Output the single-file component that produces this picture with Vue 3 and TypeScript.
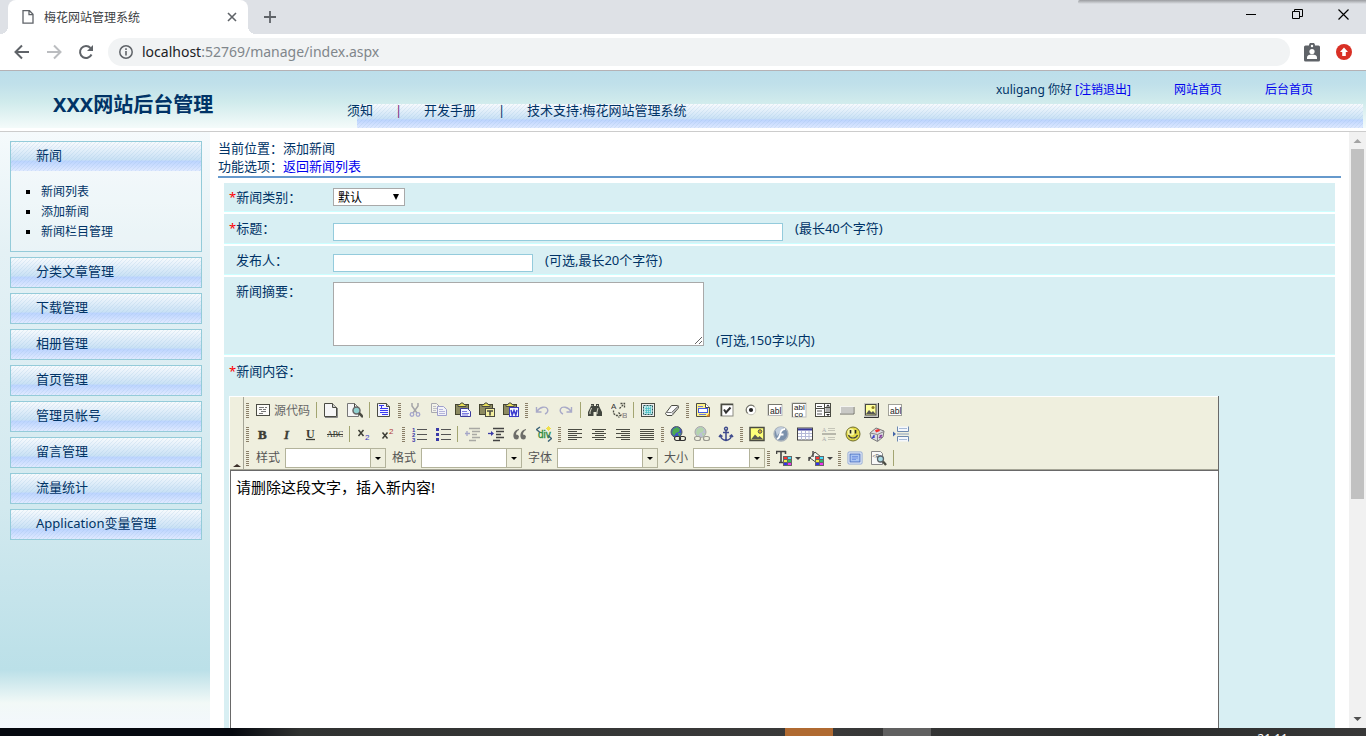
<script setup lang="ts">
import { ref } from 'vue'

interface Tool {
  kind: 'button' | 'sep' | 'grip' | 'combo'
  label?: string
  icon?: string
  text?: string
  menu?: boolean
  short?: boolean
}

const D = '#4a4b42'

const icons: Record<string, string> = {
  source: `<rect x="1.500" y="2.500" width="13" height="11" fill="#fbfbf8" stroke="${D}"/><path d="M4 5.500h5M10 5.500h2M4 7.500h3M8 7.500h3M6 9.500h5M4 11.500h4" stroke="#777"/>`,
  newpage: `<path d="M1.500 1.500h8l4 4v9h-12z" fill="#f6f6f6" stroke="${D}"/><path d="M9.500 1.500v4h4" fill="#ccc" stroke="${D}"/><path d="M2 15.500h12.500V6" fill="none" stroke="#888"/>`,
  preview: `<path d="M.500 1.500h7l4 4v9h-11z" fill="#f6f6f6" stroke="#777"/><path d="M7.500 1.500v4h4" fill="none" stroke="${D}"/><circle cx="9.500" cy="8.500" r="3.500" fill="#8fd0cf" stroke="#666" stroke-width="1.500"/><path d="M12 11l4 4" stroke="${D}" stroke-width="2.500"/>`,
  template: `<path d="M2.500 1.500h8l3 3v10h-12V1.500z" fill="#f2f3ff" stroke="${D}"/><path d="M10.500 1.500v3h3" fill="#ccc" stroke="${D}"/><path d="M3 3.500h5M5.500 3v3M4 6.500h8M4 8.500h8M4 10.500h8M6 12.500h6" stroke="#3a3af0"/>`,
  cut: `<path d="M5 1v3l5 7M11 1v3l-5 7" fill="none" stroke="#a5a5a8" stroke-width="1.500"/><circle cx="5" cy="12.500" r="1.800" fill="none" stroke="#a5a6cc" stroke-width="1.300"/><circle cx="11" cy="12.500" r="1.800" fill="none" stroke="#a5a6cc" stroke-width="1.300"/>`,
  copy: `<path d="M.500 1.500h5l3 3v6h-8z" fill="#f3f3ea" stroke="#a9a9b0"/><path d="M2 4.500h3M2 6.500h4M2 8.500h3" stroke="#c0c0c6"/><path d="M6.500 4.500h6l3 3v6h-9z" fill="#f3f3f8" stroke="#9fa0cc"/><path d="M8 7.500h4M8 9.500h6M8 11.500h6" stroke="#b5b5da"/>`,
  paste: `<rect x=".500" y="2.500" width="13" height="10" fill="#8c8a60" stroke="#44442e"/><path d="M3 4.500V2.500h2l1-1.500h2l1 1.500h2v2z" fill="#e9e15a" stroke="${D}"/><path d="M5.500 6.500h7l3 3v5h-10z" fill="#f3f5ff" stroke="#3b3b9b"/><path d="M7 9.500h5M7 11.500h7M7 13h6" stroke="#7c7ce0"/>`,
  pastetext: `<rect x=".500" y="2.500" width="13" height="10" fill="#8c8a60" stroke="#44442e"/><path d="M3 4.500V2.500h2l1-1.500h2l1 1.500h2v2z" fill="#e9e15a" stroke="${D}"/><rect x="6.500" y="6.500" width="9" height="8" fill="#f5f0a0" stroke="${D}"/><path d="M8 9h6M11 9v4.500" stroke="${D}" stroke-width="1.600"/>`,
  pasteword: `<rect x=".500" y="2.500" width="13" height="10" fill="#8c8a60" stroke="#44442e"/><path d="M3 4.500V2.500h2l1-1.500h2l1 1.500h2v2z" fill="#e9e15a" stroke="${D}"/><rect x="6.500" y="5.500" width="9" height="9" fill="#f3f5ff" stroke="#3b3bc0"/><path d="M8 8l1.200 5 1.800-4.500 1.800 4.500L14 8" fill="none" stroke="#3b3bd0" stroke-width="1.500"/>`,
  undo: `<path d="M2.500 5v5h5M3 9.500c3-5 9-5.500 10.500-2.500 .8 2-.5 4-2.500 5" fill="none" stroke="#a9aac8" stroke-width="1.400"/>`,
  redo: `<path d="M13.500 5v5h-5M13 9.500c-3-5-9-5.500-10.500-2.500-.8 2 .5 4 2.500 5" fill="none" stroke="#a9aac8" stroke-width="1.400"/>`,
  find: `<path d="M4 2h3v2h2V2h3v2l3 6v4H9.500v-4h-3v4H1v-4l3-6z" fill="#42463f"/><path d="M4.500 6L3 10v2M11 6l-1 4v2M5 3v1M10.500 3v1" stroke="#d8d8c8" fill="none"/>`,
  replace: `<text x="0" y="6.500" font-size="8" font-family="Liberation Sans" fill="#333">A</text><text x="11" y="15.500" font-size="8" font-family="Liberation Sans" font-weight="bold" fill="#999">B</text><path d="M8.500 6.500l4-4M9.500 1.500h4v4" stroke="${D}" stroke-width="1.300" fill="none" stroke-dasharray="2 1"/><path d="M2.500 8.500v3l3 2h3M7.500 10.500l2.500 2.500-2.500 2.500" stroke="${D}" stroke-width="1.300" fill="none" stroke-dasharray="2 1"/>`,
  selectall: `<rect x="1.500" y="1.500" width="13" height="13" fill="#efefef" stroke="${D}"/><rect x="3.500" y="3.500" width="9" height="9" fill="#bfe9ea" stroke="#25575a" stroke-dasharray="2 1"/><path d="M5 6.500h6M5 8.500h6M5 10.500h6M6.500 4.500v7M8.500 4.500v7M10.500 4.500v7" stroke="#43bfc4" stroke-width=".7"/>`,
  eraser: `<path d="M1.500 11.500l6-8h6q2 1 .5 3l-6 7h-5z" fill="#fafafa" stroke="${D}"/><path d="M2 10.500h5.500l7-7" fill="none" stroke="#777"/><path d="M8 13l6-7v-2l-6 7z" fill="#aaa"/>`,
  form: `<path d="M1.500 1.500h9l4 4v9h-13z" fill="#fff38a" stroke="${D}"/><path d="M10.500 1.500v4h4" fill="#fff" stroke="${D}"/><path d="M3 4.500h5M4 12.500h7" stroke="#6a75d8"/><rect x="3.500" y="6.500" width="9" height="4" fill="#fff" stroke="#4458e8"/><path d="M11 14.500l3.500-3.500v3.500z" fill="#e88a2a"/>`,
  checkbox: `<rect x="2" y="2" width="12" height="12" fill="#fff" stroke="#8b8b82"/><path d="M2.500 14V2.500H14" fill="none" stroke="${D}" stroke-width="1.500"/><path d="M5 7.500l2 3 4.500-5" fill="none" stroke="#333" stroke-width="2"/>`,
  radio: `<circle cx="8" cy="8" r="4.800" fill="#fff" stroke="#c4c4ba"/><path d="M4.600 11.400a4.800 4.800 0 0 1 6.800-6.800" fill="none" stroke="#77776e" stroke-width="1.200"/><circle cx="8" cy="8" r="2.100" fill="#222"/>`,
  textfield: `<rect x="1" y="2.500" width="14" height="11" fill="#fff" stroke="#bbb"/><path d="M1.500 13V2.500H15" fill="none" stroke="#77776e"/><text x="3" y="11.500" font-size="8.500" font-family="Liberation Sans" fill="#222">abl</text>`,
  textarea: `<rect x="1" y="1" width="14" height="14" fill="#fff" stroke="#bbb"/><path d="M1.500 15V1.500H15" fill="none" stroke="#77776e"/><text x="3" y="8" font-size="8" font-family="Liberation Sans" fill="#222">abl</text><text x="3.500" y="14.500" font-size="8" font-family="Liberation Sans" fill="#222">co</text>`,
  selectfield: `<rect x=".500" y="1.500" width="15" height="13" fill="#fff" stroke="${D}"/><path d="M0 6.500h10M9.500 1v14M10 5.500h6M10 10.500h6" stroke="${D}"/><path d="M2 4.500h5M2 9h5M2 12h5" stroke="#555"/><path d="M11 4.500h4l-2-2zM11 12h4l-2 2z" fill="#222"/><rect x="10.500" y="6" width="4.500" height="4" fill="#aaa"/>`,
  button: `<rect x="1.500" y="4.500" width="13" height="7" fill="#c9c9c6" stroke="#f4f4f0"/><path d="M1 12h14V5" fill="none" stroke="#6b6b65"/>`,
  imagebutton: `<rect x="1" y="1" width="14" height="14" fill="#c8c8c2"/><path d="M1 15.500h14.500V1" fill="none" stroke="#333"/><rect x="2.500" y="2.500" width="10.500" height="10.500" fill="#ffff9a" stroke="${D}"/><path d="M3 12l3-4 2.500 2.500L10 9l3 3.500z" fill="#555"/><circle cx="10" cy="5.500" r="1.500" fill="#8b7b20"/>`,
  hidden: `<rect x="1.500" y="2.500" width="13" height="11" fill="#fff" stroke="${D}" stroke-dasharray="1 1"/><text x="3" y="11.500" font-size="8.500" font-family="Liberation Sans" fill="#222">abl</text>`,
  bold: `<text x="3" y="12.500" font-size="13" font-family="Liberation Serif" font-weight="bold" fill="#3c3d35" stroke="#3c3d35" stroke-width=".500">B</text>`,
  italic: `<text x="5" y="12.500" font-size="13" font-family="Liberation Serif" font-weight="bold" font-style="italic" fill="#3c3d35" stroke="#3c3d35" stroke-width=".300">I</text>`,
  underline: `<text x="3" y="11.500" font-size="12" font-family="Liberation Serif" font-weight="bold" fill="#3c3d35">U</text><path d="M3 13.500h9" stroke="#3c3d35" stroke-width="1.300"/>`,
  strike: `<text x="0" y="11" font-size="8" font-family="Liberation Serif" fill="#22231b">ABC</text><path d="M0 8.500h16" stroke="#3c3d35"/>`,
  sub: `<path d="M2.500 4l5 6M7.500 4l-5 6" stroke="#3c3d35" stroke-width="1.500"/><text x="9" y="14" font-size="8" font-family="Liberation Sans" fill="#3a3ac0">2</text>`,
  sup: `<path d="M2.500 6.500l5 6M7.500 6.500l-5 6" stroke="#3c3d35" stroke-width="1.500"/><text x="9" y="8" font-size="8" font-family="Liberation Sans" fill="#b03a3a">2</text>`,
  ol: `<path d="M6 3.500h10M6 8.500h10M6 13.500h10" stroke="#555"/><text x="1" y="5.500" font-size="6" font-family="Liberation Sans" font-weight="bold" fill="#3a3aa8">1</text><text x="1" y="10.500" font-size="6" font-family="Liberation Sans" font-weight="bold" fill="#3a3aa8">2</text><text x="1" y="15.500" font-size="6" font-family="Liberation Sans" font-weight="bold" fill="#3a3aa8">3</text>`,
  ul: `<path d="M6 3.500h10M6 8.500h10M6 13.500h10" stroke="#555"/><path d="M1 2h3v3H1zM1 7h3v3H1zM1 12h3v3H1z" fill="#3a3aa8"/>`,
  outdent: `<path d="M5 2.500h11M8 5.500h8M8 8.500h5M8 11.500h8M5 14.500h7" stroke="#a9a9a4" stroke-width="1.300"/><path d="M1 7.500h5M3 5v5" stroke="#a5a6c8" stroke-width="1.300"/>`,
  indent: `<path d="M5 2.500h11M8 5.500h8M8 8.500h5M8 11.500h8M5 14.500h7" stroke="#444" stroke-width="1.300"/><path d="M0 7.500h4" stroke="#3a3aa8" stroke-width="1.300"/><path d="M3 5v5l3-2.500z" fill="#3a3aa8"/>`,
  quote: `<path d="M7 3C3 4 1 6.500 1.500 11q.5 2.500 3 2.500 2.500-.5 2.500-3-.5-2-3-2 0-3 3-4.500zM14 3c-4 1-6 3.500-5.500 8q.5 2.500 3 2.500 2.500-.5 2.500-3-.5-2-3-2 0-3 3-4.500z" fill="#6d6d69"/>`,
  div: `<text x="2" y="11.500" font-size="10" font-family="Liberation Sans" fill="#2b8a3a" stroke="#2b8a3a" stroke-width=".300">div</text><path d="M4 1L.500 3.500 4 6.500M12 9.500l3.500 3-3.500 3" fill="none" stroke="#3d6478" stroke-width="1.500"/><path d="M12.500 0v5M10 2.500h5M11 1l3 3M14 1l-3 3" stroke="#f0e04a"/>`,
  left: `<path d="M1 3.500h14M1 5.500h9M1 7.500h14M1 9.500h9M1 11.500h14M1 13.500h9" stroke="${D}"/>`,
  center: `<path d="M1 3.500h14M4 5.500h9M1 7.500h14M4 9.500h9M1 11.500h14M4 13.500h9" stroke="${D}"/>`,
  right: `<path d="M1 3.500h14M6 5.500h9M1 7.500h14M6 9.500h9M1 11.500h14M6 13.500h9" stroke="${D}"/>`,
  justify: `<path d="M1 3.500h14M1 5.500h14M1 7.500h14M1 9.500h14M1 11.500h14M1 13.500h14" stroke="${D}"/>`,
  link: `<circle cx="6.500" cy="6" r="5.500" fill="#3f55c8" stroke="#555b60"/><path d="M3 3l4-2 3 2-1 3-3 1-2 3-2-3zM8 7l3 0-2 4z" fill="#4dab50"/><rect x="4.500" y="10.500" width="6" height="4" rx="2" fill="#efefde" stroke="#333" stroke-width="1.200"/><rect x="9.500" y="10.500" width="6" height="4" rx="2" fill="none" stroke="#333" stroke-width="1.200"/>`,
  unlink: `<g opacity=".45"><circle cx="6.500" cy="6" r="5.500" fill="#7f89c8" stroke="#555b60"/><path d="M3 3l4-2 3 2-1 3-3 1-2 3-2-3zM8 7l3 0-2 4z" fill="#6db570"/><rect x=".500" y="10.500" width="6" height="4" rx="2" fill="#efefde" stroke="#333" stroke-width="1.200"/><rect x="9.500" y="10.500" width="6" height="4" rx="2" fill="#efefde" stroke="#333" stroke-width="1.200"/></g>`,
  anchor: `<circle cx="8" cy="2.700" r="1.500" fill="none" stroke="#3e4a8c" stroke-width="1.400"/><path d="M8 4v10.500M5 6.500h6M2.500 9.500c.5 3 2.500 4.500 5.500 5 3-.5 5-2 5.500-5M1 11l1.500-2 2 1.500M15 11l-1.500-2-2 1.500" fill="none" stroke="#3e4a8c" stroke-width="1.500"/>`,
  image: `<rect x="1" y="1.500" width="14" height="13" fill="#ffff7a" stroke="${D}" stroke-width="1.500"/><path d="M2 13.500l4-5 3 3 1.500-1.500 4 3.500z" fill="#5a5a55"/><circle cx="11" cy="5.500" r="1.800" fill="#d9a92b" stroke="#555"/>`,
  flash: `<circle cx="8" cy="8" r="7" fill="#7b91ac" stroke="#a9b1ba" stroke-width="1.300"/><path d="M2.500 4a7 7 0 0 1 8-2.500L4 10z" fill="#c3cfdd"/><path d="M12 3c-4 0-4.500 3-5 5.500S5.500 12.500 4 13M7 8.500h3.500" fill="none" stroke="#fff" stroke-width="1.800"/>`,
  table: `<rect x=".500" y="2" width="15" height="12" fill="#fff" stroke="#444"/><path d="M1 2.500h14v2H1z" fill="#37379b"/><path d="M1 7.500h14M1 10.500h14M4.500 5v9M8.500 5v9M12 5v9" stroke="#b5b9d8"/>`,
  hr: `<path d="M1 8h14" stroke="#999a90" stroke-width="1.300"/><text x="1" y="6" font-size="6" font-family="Liberation Serif" fill="#aaa">A</text><text x="1" y="15" font-size="6" font-family="Liberation Serif" fill="#aaa">A</text><path d="M7 2.500h7M7 4.500h7M7 11.500h7M7 13.500h7" stroke="#c5c5b8"/>`,
  smiley: `<circle cx="8" cy="8" r="7" fill="#e3da48" stroke="#6e6c2c"/><circle cx="6" cy="6" r="3.500" fill="#f8f6a0"/><path d="M5.500 4v3.500M10.500 4v3.500" stroke="#222" stroke-width="1.600"/><path d="M3.500 9c1.500 4 7.500 4 9 0" fill="none" stroke="#444" stroke-width="1.200"/>`,
  special: `<path d="M1 7l6-5 8 3-1 6-5.500 4.500L2 12z" fill="#dcdce2" stroke="#777"/><path d="M8.500 15V8.500l6.500-3M8.500 8.500L1 7" fill="none" stroke="#888"/><path d="M6 4l4-1 1 2-4 1.500z" fill="#f03030"/><path d="M3 12.500l2-3M5 12V9" stroke="#4040c8" stroke-width="1.300"/><path d="M10 12l3-3M11 9l1.500 3" stroke="#8a40a0" stroke-width="1.300"/>`,
  pagebreak: `<path d="M4.500 .500v5h11v-5M4.500 15.500v-5h11v5" fill="#f4f7fc" stroke="#6d88ae"/><path d="M6 2.500h8M6 13.500h8" stroke="#a8bcd8"/><path d="M4 8h12" stroke="#8aa0c0"/><path d="M0 5.500v5L3 8z" fill="#4466a8"/>`,
  color: `<path d="M0 1.500h10M.5 1v3M9.500 1v3M5 2v10M3 12.500h4" fill="none" stroke="#444" stroke-width="1.600"/><rect x="7" y="6" width="9" height="10" fill="#666"/><path d="M8 7h3v2H8z" fill="#f33"/><path d="M12 7h3v2h-3z" fill="#4df"/><path d="M8 10h3v2H8z" fill="#ee4"/><path d="M12 10h3v2h-3z" fill="#3b6"/><path d="M8 13h3v2H8z" fill="#33e"/><path d="M12 13h3v2h-3z" fill="#e3e"/>`,
  bgcolor: `<path d="M2 8l5-6 6 5-4 6z" fill="#f4f4ee" stroke="${D}"/><path d="M5 1v6M1 7v4M2 7l-1 3" stroke="#444" stroke-width="1.400" fill="none"/><rect x="7" y="6" width="9" height="10" fill="#666"/><path d="M8 7h3v2H8z" fill="#f33"/><path d="M12 7h3v2h-3z" fill="#4df"/><path d="M8 10h3v2H8z" fill="#ee4"/><path d="M12 10h3v2h-3z" fill="#3b6"/><path d="M8 13h3v2H8z" fill="#33e"/><path d="M12 13h3v2h-3z" fill="#e3e"/>`,
  maximize: `<rect x="1" y="2" width="14" height="12" rx="1" fill="#fff" stroke="#8aa4d4"/><rect x="3" y="4" width="10" height="8" fill="#a9c4f2" stroke="#4a70c0"/><path d="M5 6.500h6M5 8h6M5 9.500h4" stroke="#6c8ede" stroke-width=".800"/>`,
  blocks: `<path d="M.500 1.500h9l2 2v11h-11z" fill="#f8f8f8" stroke="#888"/><text x="1.500" y="7.500" font-size="5" font-family="Liberation Sans" fill="#555">&lt;P&gt;</text><circle cx="9.500" cy="9" r="3" fill="#a9dce6" stroke="#5c6468" stroke-width="1.300"/><path d="M12 11.500l3 3.500" stroke="${D}" stroke-width="2.300"/>`,
}

const b = (icon: string, label: string): Tool => ({ kind: 'button', icon, label })
const sep: Tool = { kind: 'sep' }
const grip: Tool = { kind: 'grip' }

const toolRows: Tool[][] = [
  [
    grip, { kind: 'button', icon: 'source', label: '源代码', text: '源代码' }, sep,
    b('newpage', '新建'), b('preview', '预览'), sep, b('template', '模板'), grip,
    b('cut', '剪切'), b('copy', '复制'), b('paste', '粘贴'), b('pastetext', '粘贴为无格式文本'), b('pasteword', '从 MS Word 粘贴'), grip,
    b('undo', '撤消'), b('redo', '重做'), sep, b('find', '查找'), b('replace', '替换'), sep,
    b('selectall', '全选'), b('eraser', '清除格式'), grip,
    b('form', '表单'), b('checkbox', '复选框'), b('radio', '单选按钮'), b('textfield', '单行文本'), b('textarea', '多行文本'),
    b('selectfield', '列表'), b('button', '按钮'), b('imagebutton', '图像域'), b('hidden', '隐藏域'),
  ],
  [
    grip, b('bold', '加粗'), b('italic', '倾斜'), b('underline', '下划线'), b('strike', '删除线'), sep,
    b('sub', '下标'), b('sup', '上标'), grip, b('ol', '编号列表'), b('ul', '项目列表'), sep,
    b('outdent', '减少缩进'), b('indent', '增加缩进'), b('quote', '块引用'), b('div', '创建 DIV'), grip,
    b('left', '左对齐'), b('center', '居中'), b('right', '右对齐'), b('justify', '两端对齐'), grip,
    b('link', '超链接'), b('unlink', '取消超链接'), b('anchor', '锚点'), grip,
    b('image', '图像'), b('flash', 'Flash'), b('table', '表格'), b('hr', '水平线'), b('smiley', '表情符'),
    b('special', '特殊符号'), b('pagebreak', '分页符'),
  ],
  [
    grip, { kind: 'combo', label: '样式' }, { kind: 'combo', label: '格式' }, { kind: 'combo', label: '字体' },
    { kind: 'combo', label: '大小', short: true }, grip,
    { kind: 'button', icon: 'color', label: '文本颜色', menu: true },
    { kind: 'button', icon: 'bgcolor', label: '背景颜色', menu: true }, grip,
    b('maximize', '全屏'), b('blocks', '显示区块'), sep,
  ],
]

const newsItems = ['新闻列表', '添加新闻', '新闻栏目管理']
const sections = ['分类文章管理', '下载管理', '相册管理', '首页管理', '管理员帐号', '留言管理', '流量统计', 'Application变量管理']

const title = ref('')
const publisher = ref('')
const summary = ref('')
const category = ref('默认')
const content = ref('请删除这段文字，插入新内容!')
</script>

<template>
  <div class="screen">
    <div class="tabstrip">
      <div class="tab">
        <svg class="doc" width="12" height="14" viewBox="0 0 12 14"><path d="M1 .7h6.500L11 4.200v9H1zM7 .7v4h4" fill="none" stroke="#5f6368" stroke-width="1.300" /></svg>
        <span class="tab-title">梅花网站管理系统</span>
        <button class="plain" aria-label="关闭标签页">
          <svg width="10" height="10" viewBox="0 0 10 10"><path d="M1 1l8 8M9 1L1 9" stroke="#5f6368" stroke-width="1.600" /></svg>
        </button>
      </div>
      <button class="plain add" aria-label="新标签页">
        <svg width="12" height="12" viewBox="0 0 12 12"><path d="M6 0v12M0 6h12" stroke="#5f6368" stroke-width="1.800" /></svg>
      </button>
      <div class="window-controls">
        <button class="plain" aria-label="最小化"><svg width="11" height="11" viewBox="0 0 11 11"><path d="M0 5.500h10" stroke="#000" /></svg></button>
        <button class="plain" aria-label="还原"><svg width="11" height="11" viewBox="0 0 11 11"><path d="M.5 2.500h7v7h-7zM2.500 2.500v-2h8v7h-3" fill="none" stroke="#000" /></svg></button>
        <button class="plain" aria-label="关闭"><svg width="11" height="11" viewBox="0 0 11 11"><path d="M.5 .5l10 10M10.500 .5l-10 10" stroke="#000" stroke-width="1.200" /></svg></button>
      </div>
      <div class="edge-shadow"></div>
    </div>

    <div class="toolbar">
      <button class="plain nav" aria-label="后退"><svg width="16" height="16" viewBox="0 0 16 16"><path d="M15 8H2M8 1.500L1.500 8 8 14.500" fill="none" stroke="#5f6368" stroke-width="2" /></svg></button>
      <button class="plain nav" aria-label="前进"><svg width="16" height="16" viewBox="0 0 16 16"><path d="M1 8h13M8 1.500L14.500 8 8 14.500" fill="none" stroke="#bbbdc0" stroke-width="2" /></svg></button>
      <button class="plain nav" aria-label="重新加载"><svg width="16" height="16" viewBox="0 0 16 16"><path d="M13.500 10.500A6 6 0 1 1 12.500 4" fill="none" stroke="#5f6368" stroke-width="2" /><path d="M15 1v6H9z" fill="#5f6368" /></svg></button>
      <div class="omnibox">
        <svg width="14" height="14" viewBox="0 0 14 14"><circle cx="7" cy="7" r="6.200" fill="none" stroke="#5f6368" stroke-width="1.500" /><path d="M7 6v4.500M7 3.300v1.600" stroke="#5f6368" stroke-width="1.600" /></svg>
        <a class="url" href="#"><span>localhost</span>:52769/manage/index.aspx</a>
      </div>
      <button class="plain ext" aria-label="用户"><svg width="16" height="19" viewBox="0 0 16 19"><path d="M1.500 2.500H5a3 3 0 0 1 6 0h3.500q1.500 0 1.500 1.500v13q0 1.500-1.500 1.500h-13Q0 18.500 0 17V4q0-1.500 1.500-1.500z" fill="#5f6368" /><circle cx="8" cy="3" r="1.200" fill="#fff" /><circle cx="8" cy="8.500" r="2.600" fill="#fff" /><path d="M3 16v-1.500q0-3 5-3t5 3V16z" fill="#fff" /></svg></button>
      <button class="plain ext" aria-label="更新"><svg width="16" height="16" viewBox="0 0 16 16"><circle cx="8" cy="8" r="8" fill="#d93025" /><path d="M8 3.500L12 8H9.800v4H6.200V8H4z" fill="#fff" /></svg></button>
    </div>

    <header class="banner">
      <h1>XXX网站后台管理</h1>
      <div class="banner-right">
        <div class="account">
          <span>xuligang 你好 <a href="#">[注销退出]</a></span>
          <a href="#">网站首页</a>
          <a href="#">后台首页</a>
        </div>
        <nav class="topnav">
          <a href="#">须知</a><i class="violet">|</i><a href="#">开发手册</a><i>|</i><a href="#">技术支持:梅花网站管理系统</a>
        </nav>
      </div>
    </header>

    <div class="body">
      <aside class="sidebar">
        <section class="group">
          <button class="group-head">新闻</button>
          <ul>
            <li v-for="item in newsItems" :key="item"><a href="#">{{ item }}</a></li>
          </ul>
        </section>
        <section v-for="name in sections" :key="name" class="group">
          <button class="group-head">{{ name }}</button>
        </section>
      </aside>

      <main class="content">
        <div class="crumbs">
          <div>当前位置：添加新闻</div>
          <div>功能选项：<a href="#">返回新闻列表</a></div>
        </div>
        <form class="form" @submit.prevent>
          <div class="row">
            <label for="category"><em>*</em>新闻类别：</label>
            <span class="category">
              <select id="category" v-model="category"><option>默认</option></select>
            </span>
          </div>
          <div class="row tall">
            <label for="title"><em>*</em>标题：</label>
            <input id="title" v-model="title" type="text" class="wide">
            <span class="hint">(最长40个字符)</span>
          </div>
          <div class="row">
            <label for="publisher" class="optional">发布人：</label>
            <input id="publisher" v-model="publisher" type="text">
            <span class="hint">(可选,最长20个字符)</span>
          </div>
          <div class="row summary">
            <label for="summary" class="optional">新闻摘要：</label>
            <textarea id="summary" v-model="summary"></textarea>
            <span class="hint">(可选,150字以内)</span>
          </div>
          <div class="article">
            <label for="article"><em>*</em>新闻内容：</label>
            <div class="editor">
              <div class="editor-top">
                <button class="collapser" type="button" aria-label="折叠工具栏"><span></span></button>
                <div class="tool-rows">
                  <div v-for="(row, r) in toolRows" :key="r" class="tool-row">
                    <template v-for="(tool, t) in row" :key="t">
                      <span v-if="tool.kind === 'sep'" class="sep"></span>
                      <span v-else-if="tool.kind === 'grip'" class="grip"></span>
                      <label v-else-if="tool.kind === 'combo'" class="combo" :class="{ short: tool.short }">
                        {{ tool.label }}
                        <span class="combo-box"><select :aria-label="tool.label"><option></option></select></span>
                      </label>
                      <button v-else type="button" class="tool" :class="{ source: tool.text, menu: tool.menu }" :aria-label="tool.label">
                        <svg width="16" height="16" viewBox="0 0 16 16" v-html="icons[tool.icon ?? '']"></svg>
                        <span v-if="tool.text">{{ tool.text }}</span>
                        <span v-if="tool.menu" class="caret"></span>
                      </button>
                    </template>
                  </div>
                </div>
              </div>
              <textarea id="article" v-model="content" class="article-text"></textarea>
            </div>
          </div>
        </form>
      </main>

      <div class="scrollbar">
        <svg width="17" height="17" viewBox="0 0 17 17"><path d="M4.500 11h8l-4-4z" fill="#a3a3a3" /></svg>
        <div class="thumb"></div>
        <svg class="down" width="17" height="17" viewBox="0 0 17 17"><path d="M4.500 6h8l-4 4z" fill="#505050" /></svg>
      </div>
    </div>

    <footer class="taskbar">
      <div class="left"></div>
      <div class="task active"></div>
      <div class="gap"></div>
      <div class="task"></div>
      <time>21:11</time>
    </footer>
  </div>
</template>

<style>
html, body { margin: 0; overflow: hidden; }
</style>

<style scoped>
.screen {
  --stripes: linear-gradient(135deg, rgba(150, 190, 220, .22) 13%, transparent 13% 50%, rgba(150, 190, 220, .22) 50% 63%, transparent 63%);
  --shade: linear-gradient(#f7fafd, #c9e1f5 62%, #bcd4ff 66%, #dfe9ff);
  display: flex;
  flex-direction: column;
  height: 100vh;
  overflow: hidden;
  background: #fff;
  color: #003366;
  font: 13px/18px "Noto Sans", "Noto Sans CJK SC", sans-serif;
}
.screen * { box-sizing: border-box; }
a { color: #00e; text-decoration: none; }
button, input, select, textarea { font-family: inherit; border-radius: 0; }
.plain { display: flex; align-items: center; justify-content: center; padding: 0; border: 0; background: none; }

.tabstrip { position: relative; display: flex; flex: none; height: 34px; padding-left: 8px; background: #dee1e6; }
.tab { position: relative; display: flex; align-items: center; width: 240px; padding: 0 11px 0 14px; border-radius: 8px 8px 0 0; background: #fff; color: #3c4043; font-size: 12px; }
.tab::before, .tab::after { content: ""; position: absolute; bottom: 0; width: 8px; height: 8px; }
.tab::before { left: -8px; background: radial-gradient(circle at 0 0, transparent 8px, #fff 8px); }
.tab::after { right: -8px; background: radial-gradient(circle at 100% 0, transparent 8px, #fff 8px); }
.doc { flex: none; margin-right: 10px; }
.tab-title { flex: 1; padding-top: 1px; }
.add { width: 44px; }
.window-controls { display: flex; height: 29px; margin-left: auto; }
.window-controls button { width: 46px; }
.edge-shadow { position: absolute; top: 0; right: 0; width: 288px; height: 4px; border-radius: 4px 0 0 4px; background: linear-gradient(#9a9ca0, #dee1e6); }

.toolbar { display: flex; flex: none; align-items: center; height: 37px; padding: 0 6px; border-bottom: 1px solid #b5b1b4; }
.nav { width: 32px; height: 32px; }
.omnibox { display: flex; flex: 1; align-items: center; gap: 9px; height: 28px; margin: 0 6px; padding: 0 11px; border-radius: 14px; background: #f1f3f4; }
.url { color: #80868b; font-size: 14px; }
.url span { color: #202124; }
.ext { width: 32px; height: 32px; }

.banner { display: flex; flex: none; height: 61px; border-bottom: 1px solid #ccc; background: linear-gradient(#bcdeea, #c0e0ea 13px, #d0ebec 31px, #f4fbfa 57px, #fff 57px); }
h1 { width: 347px; margin: 0; padding-left: 53px; font-size: 20px; line-height: 68px; font-weight: 700; }
.banner-right { display: flex; flex: 1; flex-direction: column; }
.account { display: flex; gap: 43px; height: 33px; padding: 10px 53px 0 0; justify-content: flex-end; font-size: 12px; }
.topnav { display: flex; height: 24px; margin-right: 3px; background: var(--stripes) 10px 0 / 4px 4px, var(--shade); background-clip: content-box; line-height: 12px; }
.topnav { position: relative; z-index: 0; background: none; }
.topnav::before { content: ""; position: absolute; z-index: -1; inset: 0 0 0 10px; background: var(--stripes) 0 0 / 4px 4px, var(--shade); }
.topnav a { color: inherit; }
.topnav i { width: 51px; font-style: normal; text-align: center; }
.topnav .violet { color: #7a2a7a; }

.body { display: flex; flex: 1; min-height: 0; overflow: hidden; }
.sidebar { display: flex; flex: none; flex-direction: column; gap: 5px; width: 210px; padding: 9px 8px 0 10px; background: linear-gradient(#f5fafc, #e4f1f5 120px, #d2e9ef 375px, #bbe0e8 calc(100% - 58px), #f2f9f7 calc(100% - 25px), #f3f7fd); }
.group { border: 1px solid #94cbd9; background: rgba(255, 255, 255, .2); }
.group-head { display: block; width: 100%; height: 29px; padding: 0 0 4px 25px; border: 0; background: var(--stripes) 0 0 / 4px 4px, var(--shade); color: inherit; font-size: 13px; line-height: 18px; text-align: left; }
.group ul { margin: 0; padding: 11px 0 9px 30px; color: #000; font-size: 12px; line-height: 20px; list-style: none; }
.group li { display: flex; align-items: center; }
.group li::before { content: ""; width: 4px; height: 4px; margin: 0 11px 0 -15px; background: #000; }
.group li a { color: #003366; }

.content { display: flex; flex: 1; flex-direction: column; min-width: 0; padding: 7px 8px 0; }
.crumbs { flex: none; padding-bottom: 1px; border-bottom: 2px solid #69c; }
.form { display: flex; flex: 1; flex-direction: column; gap: 2px; min-height: 0; padding: 5px 6px 0; }
.row { display: flex; flex: none; height: 29px; padding-left: 5px; border-bottom: 1px solid #cff; background: #d8eff3; line-height: 28px; }
.row.tall { height: 30px; }
.row.summary { height: 78px; padding-top: 5px; line-height: 18px; }
.row > label { flex: none; width: 104px; }
em { color: #f00; font-style: normal; }
.optional { padding-left: 7px; }
.category { position: relative; align-self: center; height: 18px; line-height: 18px; }
.category::after { content: ""; position: absolute; top: 6px; right: 6px; border: solid transparent; border-width: 6px 3px 0; border-top-color: #000; }
.category select { width: 72px; height: 18px; padding: 1px 4px 0; border: 1px solid #a9a9a9; background: #fff; color: #000; font-size: 12px; line-height: 16px; vertical-align: top; appearance: none; }
.row input { align-self: flex-end; width: 200px; height: 18px; margin-bottom: 2px; padding: 0 2px; border: 1px solid #94cbdc; background: #fff; }
.row input.wide { width: 450px; }
.hint { margin-left: 12px; }
.row textarea { width: 371px; height: 64px; border: 1px solid #a9a9a9; background: #fff; }
.summary .hint { align-self: flex-end; margin-bottom: 5px; }

.article { display: flex; flex: 1; flex-direction: column; min-height: 0; padding: 5px 0 0 5px; background: #d8eff3; }
.article > label { flex: none; height: 34px; }
.editor { display: flex; flex: 1; flex-direction: column; width: 90%; max-width: 990px; min-height: 0; border-left: 1px solid #fff; border-right: 1px solid #696969; }
.editor-top { display: flex; flex: none; border-top: 1px solid #fff; border-bottom: 1px solid #696969; background: #efefde; }
.collapser { display: flex; align-items: flex-end; justify-content: center; width: 14px; padding: 0 0 3px; border: 0; border-right: 1px solid #a5a596; background: none; }
.collapser span { border: solid transparent; border-width: 0 4px 3px; border-bottom-color: #3b2f28; }
.tool-rows { flex: 1; padding: 1px 0 0; }
.editor-top { box-shadow: inset 0 -1px #a5a596; }
.tool-row { display: flex; align-items: center; height: 24px; }
.tool { display: flex; align-items: center; justify-content: center; width: 24px; height: 24px; padding: 0; border: 0; background: none; color: #666; font-size: 12px; }
.tool.source { gap: 3px; width: 63px; }
.tool.menu { gap: 3px; width: 32px; }
.caret { border: solid transparent; border-width: 3px 3px 0; border-top-color: #444; }
.sep { width: 1px; height: 16px; margin: 0 2px; background: #a3a571; }
.grip { width: 3px; height: 15px; margin: 0 2px; background: repeating-linear-gradient(#8a7f68 0 1px, #efefde 1px 2px); }
.combo { display: flex; align-items: center; gap: 5px; padding-left: 6px; color: #555; font-size: 12px; }
.grip + .combo { padding-left: 5px; }
.combo-box { position: relative; display: block; width: 101px; height: 20px; border: 1px solid #b3b39b; background: linear-gradient(#b3b39b, #b3b39b) calc(100% - 14px) 0 / 1px 100% no-repeat #fff; }
.combo-box::before { content: ""; position: absolute; top: 0; right: 0; bottom: 0; width: 14px; background: #efefde; }
.combo-box::after { content: ""; position: absolute; top: 8px; right: 4px; border: solid transparent; border-width: 3px 3px 0; border-top-color: #000; }
.combo.short .combo-box { width: 72px; }
.combo select { position: relative; display: block; width: 100%; height: 18px; border: 0; background: none; appearance: none; }
.article-text { display: block; flex: 1; width: 100%; min-height: 0; padding: 7px 5px; border: 0; border-left: 1px solid #696969; outline: 0; background: #fff; color: #000; font-size: 15px; line-height: 18px; resize: none; }

.scrollbar { display: flex; flex: none; flex-direction: column; width: 17px; background: #f1f1f1; }
.scrollbar svg { flex: none; }
.thumb { flex: none; height: calc(59% - 2px); margin: 0 2px; background: #c1c1c1; }
.scrollbar .down { margin-top: auto; }

.taskbar { display: flex; flex: none; height: 8px; overflow: hidden; background: linear-gradient(90deg, #05080f 17%, #303231 22%, #3a3a3a 60%, #292b2b 83%, #383838); }
.taskbar .left { width: 785px; }
.task { width: 48px; background: #606060; }
.task.active { background: #b06a31; }
.taskbar .gap { width: 50px; }
time { margin: 2px 78px 0 auto; color: #fff; font-size: 12px; }
</style>
